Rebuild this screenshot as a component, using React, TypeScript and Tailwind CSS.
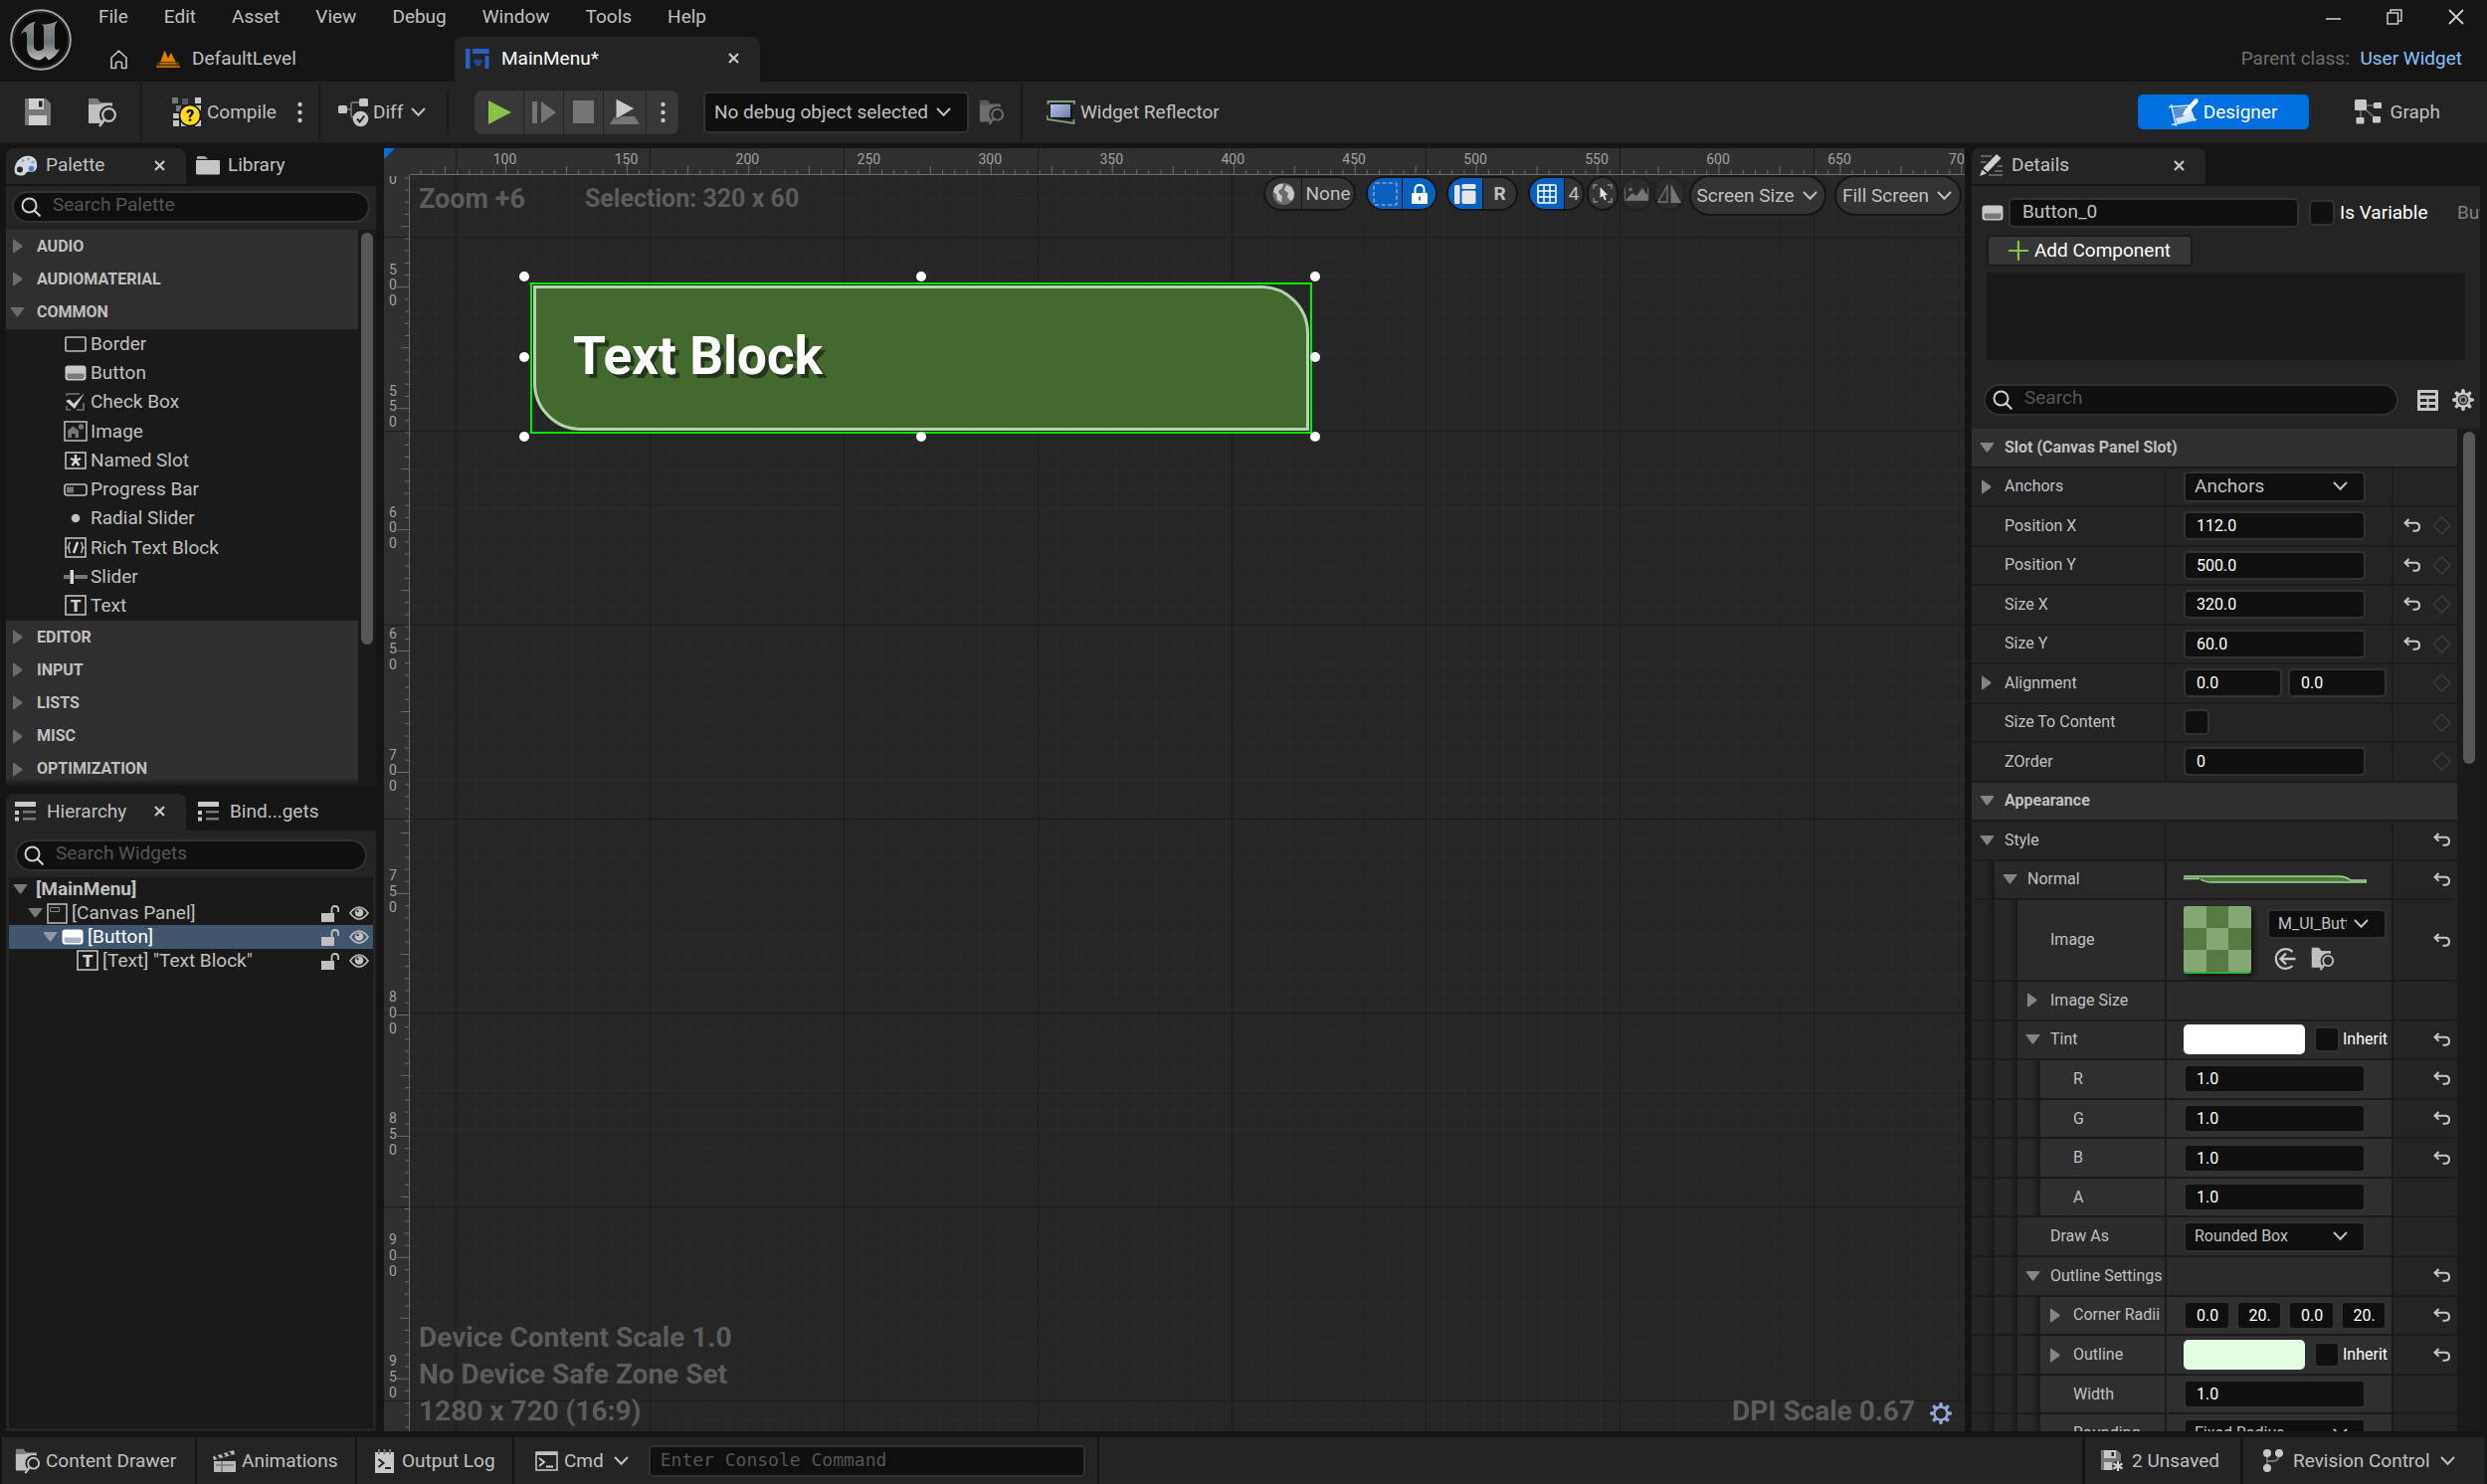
import React from 'react';

interface IconProps {
  className?: string;
}

const Glyph: React.FC<{ w: number; h: number; className?: string; children: React.ReactNode }> = ({ w, h, className = '', children }) => (
  <svg width={w} height={h} viewBox={`0 0 ${w} ${h}`} className={`shrink-0 ${className}`} fill="none" aria-hidden="true">
    {children}
  </svg>
);

/* ---------- icons ---------- */

const Chevron: React.FC<IconProps> = ({ className }) => (
  <Glyph w={15} h={10} className={className}>
    <path d="M1.500 1.500 7.500 7.800l6-6.300" stroke="#c0c0c0" strokeWidth="2" strokeLinecap="round" />
  </Glyph>
);

const CloseX: React.FC<IconProps> = ({ className }) => (
  <Glyph w={11} h={11} className={className}>
    <path d="m1 1 9 9M10 1l-9 9" stroke="#c8c8c8" strokeWidth="2.2" />
  </Glyph>
);

const Arrow: React.FC<{ open?: boolean; fill?: string }> = ({ open, fill = '#7a7a7a' }) =>
  open ? (
    <Glyph w={15} h={10}><path d="M1.2 0h12.6q1.2 0 .5 1L8.400 9q-.9 1-1.800 0L.7 1Q0 0 1.200 0Z" fill={fill} /></Glyph>
  ) : (
    <Glyph w={10} h={15}><path d="M0 1.200v12.600q0 1.200 1 .5L9 8.400q1-.9 0-1.800L1 .7Q0 0 0 1.200Z" fill={fill} /></Glyph>
  );

const SearchIcon: React.FC<IconProps> = ({ className }) => (
  <Glyph w={20} h={20} className={className}>
    <circle cx="8.5" cy="8.5" r="7" stroke="#d0d0d0" strokeWidth="2" />
    <path d="m13.500 13.500 5.300 5.300" stroke="#d0d0d0" strokeWidth="2.200" strokeLinecap="round" />
  </Glyph>
);

const UnrealLogo = () => (
  <Glyph w={62} h={62}>
    <defs>
      <linearGradient id="steel" x1="0" y1="0" x2="0" y2="1">
        <stop offset="0" stopColor="#8b8f90" />
        <stop offset=".55" stopColor="#6d7173" />
        <stop offset="1" stopColor="#b9bcbd" />
      </linearGradient>
    </defs>
    <circle cx="31" cy="31" r="29.800" fill="#0c0c0c" stroke="#a5a5a5" strokeWidth="2" />
    <circle cx="31" cy="31" r="27.500" stroke="#2e2e2e" />
    <path
      d="M11 26C13 19 19 14 26 12.500C24.500 14 24 15.500 24 18V37C24 40 26 42 29 42C31 42 33 41 34 39.500V20C34 17 33 16 31.500 15.500C38 16 44 14 48 12C46 14.500 45 17 45 20V38C45 40 46 41 47.500 41C48.500 41 49.500 40.500 50.500 39.500C48 45 44 49 39 51.500L35.500 47.500C34 49 32 50.500 29.500 51.500C22 51 17 46 17 39V26C17 24 16.300 23 15 23C13.500 23 12 24.500 11 26Z"
      fill="url(#steel)"
    />
  </Glyph>
);

const HomeIcon = () => (
  <Glyph w={19} h={20}>
    <path d="M2 8 9.500 1.200 17 8V18.500h-4.500V14q0-2-3-2t-3 2v4.500H2Z" stroke="#c0c0c0" strokeWidth="1.600" strokeLinejoin="round" />
  </Glyph>
);

const LevelIcon = () => (
  <Glyph w={24} h={20}>
    <path d="M4 14 8.500 1.500l3.500 8 3-5.500 5 10Z" fill="#d98000" />
    <path d="M1.500 13h21l1.500 6H0Z" fill="#5d3a08" />
    <path d="M4 14h16v1.500H4ZM0 17.500h24V19H0Z" fill="#c67600" />
  </Glyph>
);

const WidgetIcon = () => (
  <Glyph w={24} h={20}>
    <path d="M0 0h4.500v20H0ZM7 0h16.500v5H7ZM19.500 7h4v13h-4Z" fill="#2b5fc4" />
    <path d="M12.500 18c-6-4-4.500-7.500-2-7.500 1 0 1.700.6 2 1.300.3-.7 1-1.300 2-1.300 2.500 0 4 3.500-2 7.500Z" fill="#24488f" />
  </Glyph>
);

const SaveIcon = () => (
  <Glyph w={26} h={27}>
    <path d="M0 0h21l5 5v22H0Z" fill="#777" />
    <path d="M4 0h15v11H4ZM4 17h18v10H4Z" fill="#cfcfcf" />
    <path d="M14 2.500h3.500v6H14Z" fill="#222" />
  </Glyph>
);

const FolderSearch: React.FC<{ size?: number; color?: string; back?: string; hole?: string }> = ({ size = 30, color = '#c0c0c0', back = '#7d7d7d', hole = '#242424' }) => (
  <svg width={size} height={size} viewBox="0 0 30 30" className="shrink-0" fill="none" aria-hidden="true">
    <path d="M1 1h9l3 4h12v5H1Z" fill={back} />
    <path d="M1 7h11l2-1h11v20H1Z" fill={color} />
    <circle cx="21.500" cy="17.500" r="9.500" fill={hole} />
    <path d="m10 30 6-8 6 3-5 5Z" fill={hole} />
    <circle cx="21.500" cy="17.500" r="6.300" stroke={color} strokeWidth="2.200" />
    <path d="m17 22-5 7" stroke={color} strokeWidth="2.600" />
  </svg>
);

const CompileIcon = () => (
  <Glyph w={31} h={31}>
    <path d="M0 1h6v6H0ZM4 9h5v6H4Z" fill="#777" />
    <path d="M10 2h6v6h-6Z" fill="#555" />
    <path d="M23 1h6v6h-6ZM1 17h6v5H1ZM1 24h6v6H1ZM9 24h6v6H9ZM23 24h6v6h-6ZM23 9h6v5h-6Z" fill="#c6c6c6" />
    <circle cx="18" cy="19" r="10.500" fill="#ffdb1a" stroke="#141414" strokeWidth="1.500" />
    <text x="18" y="25" textAnchor="middle" fontSize="16" fontWeight="900" fill="#111">?</text>
  </Glyph>
);

const DiffIcon = () => (
  <Glyph w={31} h={30}>
    <path d="M8 12h6M22 5h-7q-2 0-2 2v10q0 3 3 4" stroke="#6e6e6e" strokeWidth="1.800" />
    <rect x="0" y="8" width="9" height="8" rx="1.500" fill="#c6c6c6" />
    <rect x="21" y="1" width="9" height="8" rx="1.500" fill="#c6c6c6" />
    <circle cx="22.500" cy="21.500" r="7.800" fill="#c6c6c6" />
    <path d="m19 21.500 2.700 3 4.500-6" stroke="#222" strokeWidth="2" />
  </Glyph>
);

const Dots = () => (
  <Glyph w={5} h={22}>
    <circle cx="2.500" cy="3" r="2.200" fill="#c6c6c6" />
    <circle cx="2.500" cy="11" r="2.200" fill="#c6c6c6" />
    <circle cx="2.500" cy="19" r="2.200" fill="#c6c6c6" />
  </Glyph>
);

const ReflectorIcon = () => (
  <Glyph w={29} h={24}>
    <defs>
      <linearGradient id="glass" x1="0" y1="0" x2="1" y2="1">
        <stop offset="0" stopColor="#b8c2e6" />
        <stop offset="1" stopColor="#6f7cab" />
      </linearGradient>
    </defs>
    <path d="M4 4h21l1 15-21-1Z" fill="#101010" />
    <path d="M4 4h20v13H4Z" fill="url(#glass)" />
    <path d="M1.500 4V1H28v3M.5 15v4L27.500 23v-4" stroke="#78a57b" strokeWidth="1.800" />
  </Glyph>
);

const DesignerIcon = () => (
  <Glyph w={30} h={28}>
    <path d="M5 10 22 9l3.500 12L8 24.500Z" fill="#cfe6fb" />
    <path d="M5 10h13l-3 8-8 2Z" fill="#5b91cc" />
    <path d="M0 8.500 22 7M2.500 6l5 22M3 26.500l25-5.500M22 11l4.500 12" stroke="#dcecff" strokeWidth="1.400" />
    <path d="m27.500 2.500-9 10" stroke="#fff" strokeWidth="4.500" strokeLinecap="round" />
    <path d="m17 11-3.500 6 7-2.500Z" fill="#fff" />
  </Glyph>
);

const GraphIcon = () => (
  <Glyph w={27} h={25}>
    <path d="M6 6h16M6 6v15M7 7l14 12" stroke="#777" strokeWidth="1.500" />
    <rect width="12" height="11" rx="1.500" fill="#c8c8c8" />
    <rect x="19" y="3" width="8" height="6" rx="1" fill="#c8c8c8" />
    <rect x="1.500" y="18" width="8" height="6.500" rx="1" fill="#c8c8c8" />
    <rect x="18" y="17" width="8" height="6.500" rx="1" fill="#c8c8c8" />
  </Glyph>
);

const PaletteIcon = () => (
  <Glyph w={24} h={21}>
    <path d="M1 18C-1 10 5 1 14 .8 21 .6 24 6 23 12c-1 5-4 5-8 4.500-3-.4-3 4-7 4-3 0-6-.5-7-2.500Z" fill="#d4d8dc" />
    <circle cx="6" cy="14.500" r="3" fill="#242424" />
    <circle cx="17.500" cy="13.500" r="2.700" fill="#3f7fd0" />
    <circle cx="9" cy="5.500" r="1.600" fill="#89a9cf" />
    <circle cx="14.500" cy="4" r="1.600" fill="#89a9cf" />
    <circle cx="19" cy="7" r="1.600" fill="#89a9cf" />
  </Glyph>
);

const FolderIcon = () => (
  <Glyph w={24} h={19}>
    <path d="M1 1q0-1 1-1h7l3 3H1Z" fill="#a5a5a5" />
    <path d="M0 4h23q1 0 1 1v12q0 1.500-1.500 1.500h-21Q0 18.500 0 17Z" fill="#c6c6c6" />
  </Glyph>
);

const TreeIcon = () => (
  <Glyph w={21} h={20}>
    <path d="M0 0h21v5H0ZM0 9h4v4H0ZM0 15.500h4v4H0Z" fill="#c8c8c8" />
    <path d="M8 9h13v2.500H8ZM8 16h13v2.500H8Z" fill="#777" />
  </Glyph>
);

const DetailsIcon = () => (
  <Glyph w={23} h={22}>
    <path d="M1 2h11M1 8h6M18 12h5M15 17h8M9 21h14" stroke="#777" strokeWidth="1.500" />
    <path d="M17 0l4.500 4L8 18 3.500 14Z" fill="#d0d0d0" />
    <path d="M2.500 15.500 7 19.500 0 22Z" fill="#d0d0d0" />
  </Glyph>
);

const ButtonIcon: React.FC<{ bright?: boolean }> = ({ bright }) => (
  <Glyph w={22} h={16}>
    <rect x=".5" y=".5" width="21" height="15" rx="3" fill={bright ? '#fff' : '#c8c8c8'} />
    <path d="M2.500 8.500h17v3q0 2.500-2 2.500h-13q-2 0-2-2.500Z" fill={bright ? '#a9b4c2' : '#7a7a7a'} />
  </Glyph>
);

const LockIcon = () => (
  <Glyph w={19} h={17}>
    <path d="M0 8h13v9H0Z" fill="#c0c0c0" />
    <path d="M10.500 8V4.500q0-3.500 3.300-3.500t3.300 3.500V7" stroke="#c0c0c0" strokeWidth="1.800" />
  </Glyph>
);

const EyeIcon = () => (
  <Glyph w={20} h={14}>
    <path d="M1 7q9-12 18 0-9 12-18 0Z" stroke="#c0c0c0" strokeWidth="1.600" />
    <circle cx="10" cy="6.500" r="4.300" fill="#c0c0c0" />
    <circle cx="8.500" cy="5" r="1.200" fill="#333" />
  </Glyph>
);

const TextIcon = () => (
  <Glyph w={22} h={22}>
    <rect x="1" y="1" width="20" height="19" stroke="#c0c0c0" strokeWidth="1.600" />
    <text x="11" y="17" textAnchor="middle" fontSize="17" fontWeight="900" fill="#d0d0d0">T</text>
  </Glyph>
);

const UndoIcon = () => (
  <Glyph w={18} h={15}>
    <path d="M5.500 1 1.500 4.800l4 3.800M1.500 4.800H12q4 0 4 4t-4 4H9.500" stroke="#c6c6c6" strokeWidth="2" />
  </Glyph>
);

const KeyIcon = () => (
  <Glyph w={19} h={19}>
    <path d="m9.500 1 8.500 8.500-8.500 8.500L1 9.500Z" stroke="#3d3d3d" strokeWidth="1.400" />
  </Glyph>
);

const GearIcon: React.FC<{ color?: string; solid?: boolean }> = ({ color = '#c6c6c6', solid }) => (
  <Glyph w={24} h={24}>
    {[0, 45, 90, 135, 180, 225, 270, 315].map((a) => (
      <path key={a} d="M10.500 4.500 11 1.500h2l.5 3Z" fill={color} stroke={color} transform={`rotate(${a} 12 12)`} />
    ))}
    <circle cx="12" cy="12" r="6.500" stroke={color} strokeWidth="2.400" />
    {!solid && <circle cx="12" cy="12" r="3" stroke="#8a8a8a" strokeWidth="2" />}
  </Glyph>
);

const TableIcon = () => (
  <Glyph w={21} h={21}>
    <rect width="21" height="21" rx="1" fill="#c6c6c6" />
    <path d="M3 3h15v2.500H3ZM3 9h6.500v3H3ZM11.500 9H18v3h-6.500ZM3 15h6.500v3H3ZM11.500 15H18v3h-6.500Z" fill="#242424" />
  </Glyph>
);

/* ---------- shared controls ---------- */

const fieldBox = 'rounded-[5px] border-2 border-[#323232] bg-[#0f0f0f] outline-none';

const SearchBox: React.FC<{ label: string; className?: string }> = ({ label, className = '' }) => (
  <label className={`flex h-8 items-center rounded-full border-2 border-[#323232] bg-[#0f0f0f] pl-[7px] ${className}`}>
    <SearchIcon />
    <input type="text" aria-label={label} placeholder={label} className="min-w-0 flex-1 bg-transparent pb-1 pl-3 outline-none placeholder:text-[#555]" />
  </label>
);

const Check: React.FC<{ id: string; label: string }> = ({ id, label }) => (
  <input id={id} type="checkbox" aria-label={label} className={`size-[26px] shrink-0 appearance-none ${fieldBox}`} />
);

const Drop: React.FC<{ label: string; value: string; className?: string }> = ({ label, value, className = '' }) => (
  <span className="relative flex items-center">
    <select aria-label={label} className={`appearance-none ${fieldBox} ${className}`}>
      <option>{value}</option>
    </select>
    <Chevron className="pointer-events-none absolute right-[18px]" />
  </span>
);

const PanelTab: React.FC<{ icon: React.ReactNode; title: string; active?: boolean; className?: string }> = ({ icon, title, active, className = '' }) => (
  <button className={`flex items-center rounded-t-lg pb-[2px] ${active ? 'bg-[#242424]' : ''} ${className}`}>
    <span className="flex w-8 shrink-0">{icon}</span>
    <span>{title}</span>
    {active && <CloseX className="mr-[21px] ml-auto" />}
  </button>
);

/* ---------- header ---------- */

const MENUS = ['File', 'Edit', 'Asset', 'View', 'Debug', 'Window', 'Tools', 'Help'];

const Header = () => (
  <header className="flex h-[82px] shrink-0 pl-[10px]">
    <div className="pt-[9px]"><UnrealLogo /></div>
    <div className="flex flex-1 flex-col">
      <div className="flex h-[37px] items-center justify-between pb-1">
        <nav className="flex gap-9 pl-[27px]">
          {MENUS.map((m) => <button key={m}>{m}</button>)}
        </nav>
        <div className="flex items-center gap-[46px] pr-[23px]">
          <button aria-label="Minimize"><Glyph w={15} h={16}><path d="M0 10h15" stroke="#c8c8c8" strokeWidth="1.600" /></Glyph></button>
          <button aria-label="Restore"><Glyph w={16} h={16}><path d="M1 4h10.500v11H1ZM4 4V1h11v11h-3.500" stroke="#c8c8c8" strokeWidth="1.500" /></Glyph></button>
          <button aria-label="Close"><Glyph w={16} h={16}><path d="m1 1 14 14M15 1 1 15" stroke="#d0d0d0" strokeWidth="1.800" /></Glyph></button>
        </div>
      </div>
      <div className="flex h-[45px] items-center">
        <button aria-label="Home" className="ml-[38px]"><HomeIcon /></button>
        <button className="flex w-[328px] items-center gap-3 pb-[2px] pl-7"><LevelIcon />DefaultLevel</button>
        <button className="flex h-full w-[307px] items-center gap-3 rounded-t-lg bg-[#242424] pb-[2px] pl-[11px] text-white">
          <WidgetIcon />MainMenu*<CloseX className="mr-[21px] ml-auto" />
        </button>
        <p className="ml-auto pr-[25px] pb-[2px] text-[#6f6f6f]">Parent class: <a href="#user-widget" className="ml-[6px] text-[#8ac0ff]">User Widget</a></p>
      </div>
    </div>
  </header>
);

const Toolbar = () => (
  <div className="flex h-[62px] shrink-0 items-center border-b border-[#1c1c1c] bg-[#242424]">
    <div className="flex h-[58px] w-[143px] items-center gap-[37px] border-r-2 border-[#1a1a1a] pl-[25px]">
      <button aria-label="Save"><SaveIcon /></button>
      <button aria-label="Browse"><FolderSearch /></button>
    </div>
    <div className="flex h-[58px] w-[179px] items-center border-r-2 border-[#1a1a1a] pl-[30px]">
      <button className="flex items-center gap-1"><CompileIcon />Compile</button>
      <button aria-label="Compile options" className="mr-4 ml-auto"><Dots /></button>
    </div>
    <div className="flex h-[44px] w-[129px] items-center border-r-2 border-[#1a1a1a] pl-[18px]">
      <button className="flex items-center gap-1"><DiffIcon />Diff<Chevron className="ml-1" /></button>
    </div>
    <div className="ml-[26px] flex h-[44px] divide-x divide-[#242424] overflow-hidden rounded-lg bg-[#383838]">
      <button aria-label="Play" className="flex w-[50px] items-center pl-[14px]"><Glyph w={24} h={26}><path d="M0 1v24l23-12Z" fill="#8bc24a" /></Glyph></button>
      <button aria-label="Step" className="flex w-10 items-center justify-center"><Glyph w={24} h={24}><path d="M0 1h5v22H0ZM9 1v22l15-11Z" fill="#757575" /></Glyph></button>
      <button aria-label="Stop" className="flex w-10 items-center justify-center"><Glyph w={21} h={23}><path d="M0 0h21v23H0Z" fill="#757575" /></Glyph></button>
      <button aria-label="Launch" className="flex w-[43px] items-center justify-center">
        <Glyph w={30} h={27}>
          <path d="M5 18h20l5 8H0Z" fill="#757575" />
          <path d="M6 0v21l19-11Z" fill="#c8c8c8" stroke="#383838" />
        </Glyph>
      </button>
      <button aria-label="Play options" className="flex w-8 items-center justify-center"><Dots /></button>
    </div>
    <div className="ml-[25px]">
      <Drop label="Debug object" value="No debug object selected" className="h-[42px] w-[267px] pl-[9px]" />
    </div>
    <button aria-label="Browse debug object" className="mr-4 ml-[10px]"><FolderSearch size={26} color="#6e6e6e" back="#5a5a5a" /></button>
    <button className="flex h-[58px] items-center gap-[5px] border-l-2 border-[#1a1a1a] pl-6"><ReflectorIcon />Widget Reflector</button>
    <button className="ml-auto flex h-[35px] w-[172px] items-center justify-center gap-[5px] rounded-[5px] bg-[#0070e0] text-white"><DesignerIcon />Designer</button>
    <button className="mr-[47px] ml-[46px] flex items-center gap-[9px]"><GraphIcon />Graph</button>
  </div>
);

/* ---------- palette ---------- */

const line = '#c0c0c0';

const COMMON: { name: string; icon: React.ReactNode }[] = [
  { name: 'Border', icon: <Glyph w={22} h={16}><rect x="1" y="1" width="20" height="14" rx="1" stroke={line} strokeWidth="1.600" /></Glyph> },
  { name: 'Button', icon: <ButtonIcon /> },
  { name: 'Check Box', icon: <Glyph w={22} h={20}><path d="M2 4V2h13M2 14v4h4M12 18h7v-7" stroke="#777" strokeWidth="1.500" /><path d="m1 9 4-1.500 4 4.500L20 1 10 17Z" fill="#d0d0d0" /></Glyph> },
  { name: 'Image', icon: <Glyph w={24} h={21}><rect x="1" y="1" width="22" height="19" stroke={line} strokeWidth="1.500" /><path d="M4 10 9.500 5.500 15 10v7h-3.500v-4H8v4H4.500Z" fill="#777" /><circle cx="17.500" cy="6" r="2.700" fill="#777" /></Glyph> },
  { name: 'Named Slot', icon: <Glyph w={22} h={18}><rect x="1" y="1" width="20" height="16" stroke={line} strokeWidth="1.600" /><path d="M11 3v6M11 9 6 7M11 9l5-2M11 9l-3.500 5M11 9l3.500 5" stroke="#d8d8d8" strokeWidth="2.400" /></Glyph> },
  { name: 'Progress Bar', icon: <Glyph w={24} h={13}><rect x="1" y="1" width="22" height="11" rx="2.500" stroke={line} strokeWidth="1.600" /><path d="M3 3.500h7v6H3Z" fill="#777" /></Glyph> },
  { name: 'Radial Slider', icon: <Glyph w={10} h={10}><circle cx="5" cy="5" r="4.300" fill={line} /></Glyph> },
  { name: 'Rich Text Block', icon: <Glyph w={22} h={21}><rect x="1" y="1" width="20" height="19" stroke={line} strokeWidth="1.600" /><path d="M6 5.500q-1.500 0-1.500 2T3 10.500q1.500 0 1.500 2.500T6 15.500M16 5.500q1.500 0 1.500 2t1.500 3q-1.500 0-1.500 2.500T16 15.500" stroke={line} strokeWidth="1.400" /><path d="m13 5-4 11" stroke="#d8d8d8" strokeWidth="2.400" /></Glyph> },
  { name: 'Slider', icon: <Glyph w={24} h={14}><path d="M0 5h6v4H0ZM11 5h13v4H11Z" fill="#777" /><path d="M6.500 0H10v14H6.500Z" fill="#d8d8d8" /></Glyph> },
  { name: 'Text', icon: <TextIcon /> },
];

const Category: React.FC<{ name: string; open?: boolean }> = ({ name, open }) => (
  <button className="flex items-center bg-[#2f2f2f] pl-1 text-[16px] font-bold">
    <span className="flex w-[27px] justify-center pr-[12px]"><Arrow open={open} fill="#6b6b6b" /></span>
    {name}
  </button>
);

const Palette = () => (
  <section className="flex min-h-0 flex-1 flex-col">
    <div className="flex h-[36px] shrink-0">
      <PanelTab active title="Palette" className="w-[181px] pl-2" icon={<PaletteIcon />} />
      <PanelTab title="Library" className="pl-[10px]" icon={<FolderIcon />} />
    </div>
    <div className="mt-[2px] flex min-h-0 flex-1 flex-col bg-[#242424] pt-[5px]">
      <SearchBox label="Search Palette" className="mx-[6px]" />
      <div className="mt-[7px] flex min-h-0 flex-1 bg-[#1a1a1a]">
        <div className="relative flex-1 overflow-hidden">
          <div className="grid h-[100px] auto-rows-fr">
            <Category name="AUDIO" />
            <Category name="AUDIOMATERIAL" />
            <Category name="COMMON" open />
          </div>
          <ul className="grid h-[293px] auto-rows-fr">
            {COMMON.map((w) => (
              <li key={w.name} className="flex items-center gap-[3px] pl-[58px]">
                <span className="flex w-6 justify-center">{w.icon}</span>
                {w.name}
              </li>
            ))}
          </ul>
          <div className="grid h-[166px] auto-rows-fr">
            {['EDITOR', 'INPUT', 'LISTS', 'MISC', 'OPTIMIZATION'].map((c) => <Category key={c} name={c} />)}
          </div>
          <div className="absolute inset-x-0 bottom-0 h-2 bg-linear-to-t from-[#1a1a1a] to-transparent" />
        </div>
        <div className="w-[18px] px-[3px] pt-[3px]"><div className="h-[414px] rounded-full bg-[#575757]" /></div>
      </div>
    </div>
  </section>
);

/* ---------- hierarchy ---------- */

const RowTools = () => (
  <span className="ml-auto flex items-center gap-[9px] pr-1">
    <button aria-label="Lock"><LockIcon /></button>
    <button aria-label="Visibility"><EyeIcon /></button>
  </span>
);

const Hierarchy = () => (
  <section className="flex min-h-0 flex-1 flex-col">
    <div className="flex h-[37px] shrink-0">
      <PanelTab active title="Hierarchy" className="w-[181px] pl-[9px]" icon={<TreeIcon />} />
      <PanelTab title="Bind...gets" className="pl-3" icon={<TreeIcon />} />
    </div>
    <div className="flex min-h-0 flex-1 flex-col bg-[#242424] px-[3px] pt-[9px] pb-[3px]">
      <SearchBox label="Search Widgets" className="mx-[6px]" />
      <ul className="mt-[6px] flex-1 bg-[#1a1a1a]">
        <li className="flex h-6 items-center gap-2 pl-1 font-bold"><Arrow open />[MainMenu]</li>
        <li className="flex h-6 items-center gap-[4px] pl-[19px]">
          <Arrow open />
          <Glyph w={21} h={21}><rect x="1" y="1" width="19" height="19" stroke={line} strokeWidth="1.500" /><path d="M3.500 4.500h9v4h-9Z" stroke="#8a8a8a" /></Glyph>
          [Canvas Panel]<RowTools />
        </li>
        <li className="flex h-6 items-center gap-[4px] bg-[#40566f] pl-[34px] text-white">
          <Arrow open fill="#8f99a5" /><ButtonIcon bright />[Button]<RowTools />
        </li>
        <li className="flex h-6 items-center gap-[4px] pl-[68px]"><TextIcon />[Text] "Text Block"<RowTools /></li>
      </ul>
    </div>
  </section>
);

/* ---------- designer viewport ---------- */

const PX_PER_UNIT = 2.439;
const unitX = (u: number) => 122.5 + (u - 100) * PX_PER_UNIT;
const unitY = (u: number) => 139.7 + (u - 500) * PX_PER_UNIT;
const range = (from: number, to: number, step: number) => Array.from({ length: Math.floor((to - from) / step) + 1 }, (_, i) => from + i * step);
const tick = (u: number) => (u % 50 === 0 ? 12 : u % 25 === 0 ? 8 : 4);

const Rulers = () => (
  <svg className="absolute inset-0 size-full" aria-hidden="true">
    <defs>
      <pattern id="fine" x="72" y="89" width="19.5" height="19.5" patternUnits="userSpaceOnUse">
        <path d="M.5 0v19.500M0 .5h19.500" stroke="#2a2a2a" />
      </pattern>
      <pattern id="coarse" x="72" y="89" width="195" height="195" patternUnits="userSpaceOnUse">
        <path d="M.5 0v195M0 .5h195" stroke="#1c1c1c" />
      </pattern>
      <clipPath id="left-ruler"><rect y="28" width="27" height="100%" /></clipPath>
    </defs>
    <rect width="100%" height="100%" fill="#262626" />
    <rect width="100%" height="100%" fill="url(#fine)" />
    <rect width="100%" height="27" fill="#303030" />
    <rect width="26" height="100%" fill="#303030" />
    <rect width="100%" height="100%" fill="url(#coarse)" />
    <path d="M0 0h11L0 11Z" fill="#0070e0" />
    <g stroke="#6b6b6b">
      <line x1="26" x2="100%" y1="26.500" y2="26.500" />
      <line x1="25.500" x2="25.500" y1="27" y2="100%" />
      {range(65, 700, 5).map((u) => <line key={u} x1={unitX(u)} x2={unitX(u)} y1={26 - tick(u)} y2="26" />)}
      {range(455, 980, 5).map((u) => <line key={u} y1={unitY(u)} y2={unitY(u)} x1={25 - tick(u)} x2="25" />)}
    </g>
    <g fill="#a0a0a0" fontSize="14" textAnchor="middle">
      {range(100, 700, 50).map((u) => <text key={u} x={unitX(u) - 1} y="16">{u}</text>)}
      <g clipPath="url(#left-ruler)">
        <text x="9" y="36">0</text>
        {range(500, 950, 50).map((u) =>
          String(u).split('').map((d, i) => <text key={`${u}-${i}`} x="9" y={unitY(u) - 13 + i * 15.7}>{d}</text>)
        )}
      </g>
    </g>
  </svg>
);

const pill = 'flex h-[35px] items-center divide-x divide-[#151515] overflow-hidden rounded-full border-2 border-[#151515] bg-[#333]';
const seg = 'flex h-full items-center justify-center';

const ViewportTools = () => (
  <div className="absolute top-[27px] right-[3px] flex items-start">
    <div className={`${pill} mt-px mr-[10px]`}>
      <button aria-label="Localization" className={`${seg} w-[37px]`}>
        <Glyph w={27} h={24}>
          <circle cx="13.500" cy="12" r="11" fill="#6c6c6c" />
          <path d="M4 6q4-5 9-4l-1 4-4 3 1 3 3 2-1 6-4-2-1-6-3-2ZM16 3l5 2 3 6-1 6-3 2-3-4 1-4-4-3Z" fill="#c8c8c8" />
        </Glyph>
      </button>
      <button className={`${seg} w-[52px]`}>None</button>
    </div>
    <div className={`${pill} mt-px mr-[9px]`}>
      <button aria-label="Show outlines" className={`${seg} w-[35px] bg-[#0960be]`}><Glyph w={25} h={24}><rect x="1" y="1" width="23" height="22" rx="2" stroke="#8aa0bb" strokeWidth="1.600" strokeDasharray="4 2.500" /></Glyph></button>
      <button aria-label="Respect locks" className={`${seg} w-[33px] bg-[#0960be]`}><Glyph w={16} h={20}><rect y="9" width="16" height="11" rx="1" fill="#fff" /><path d="M3.500 9V5.500Q3.500 1 8 1t4.500 4.500V9" stroke="#fff" strokeWidth="2" /><path d="M7.200 12.500h1.600v4H7.200Z" fill="#0960be" /></Glyph></button>
    </div>
    <div className={`${pill} mt-px mr-[10px]`}>
      <button aria-label="Flow direction" className={`${seg} w-[35px] bg-[#0960be]`}><Glyph w={22} h={20}><rect width="5.500" height="19" rx="1.500" fill="#e6e6e6" y="1" /><rect x="7.500" width="14" height="5" rx="1.500" fill="#e6e6e6" /><rect x="7.500" y="6.500" width="14" height="13.500" rx="2" fill="#e6e6e6" /></Glyph></button>
      <button className={`${seg} w-[33px] font-bold`}>R</button>
    </div>
    <div className={`${pill} mt-px mr-[2px]`}>
      <button aria-label="Grid snapping" className={`${seg} w-[35px] bg-[#0960be]`}><Glyph w={20} h={20}><rect x="1" y="1" width="18" height="18" rx="1" stroke="#fff" strokeWidth="1.600" /><path d="M7 1v18M13 1v18M1 7h18M1 13h18" stroke="#fff" strokeWidth="1.500" /></Glyph></button>
      <button className={`${seg} w-[18px]`}>4</button>
    </div>
    <button aria-label="Zoom to fit" className={`${pill} mt-px mr-[2px] w-8 justify-center`}>
      <Glyph w={20} h={19}><path d="M1 5V1h4M15 1h4v4M19 14v4h-4M5 18H1v-4" stroke="#8a8a8a" strokeWidth="1.400" /><path d="M7.500 3v11l2.500-2 2 4.500 1.700-1L12 11.500l3-.5Z" fill="#e0e0e0" /></Glyph>
    </button>
    <button aria-label="Preview background" className="mt-px mr-[1px] flex h-[35px] w-8 items-center justify-center rounded-full border-2 border-[#202020] bg-[#2b2b2b]">
      <Glyph w={24} h={14}><path d="M.5 1v12.500h23V1" stroke="#6a6a6a" /><path d="M1 13 8 6l4 3 6-8 5.500 8v4Z" fill="#757575" /><circle cx="6" cy="2.500" r="1.700" fill="#757575" /></Glyph>
    </button>
    <button aria-label="Flip preview" className="mt-px mr-[4px] flex h-[35px] w-8 items-center justify-center rounded-full border-2 border-[#202020] bg-[#2b2b2b]">
      <Glyph w={24} h={19}><path d="M10 2v16H1Z" stroke="#757575" strokeWidth="1.300" /><path d="M13.500 0v19H24Z" fill="#757575" /></Glyph>
    </button>
    <button className="mr-2 flex h-[41px] w-[138px] items-center justify-center gap-2 rounded-full border-2 border-[#151515] bg-[#333] pr-[2px] whitespace-nowrap">Screen Size<Chevron /></button>
    <button className="flex h-[41px] w-[128px] items-center justify-center gap-2 rounded-full border-2 border-[#151515] bg-[#333] pr-[2px] whitespace-nowrap">Fill Screen<Chevron /></button>
  </div>
);

const handle = 'absolute size-[10px] rounded-full bg-white';

const SelectedButton = () => (
  <div className="absolute top-[135px] left-[147px] h-[152px] w-[786px] border-2 border-[#00f000] p-px">
    <button className="flex size-full items-center rounded-tr-[48px] rounded-bl-[48px] border-[3px] border-[#b4d4b0] bg-[#44692f] pb-1 pl-[37px] text-[53px] font-bold text-white [text-shadow:4px_4px_0_#22351a]">
      Text Block
    </button>
    <span className={`${handle} -top-[13px] -left-[13px]`} />
    <span className={`${handle} -top-[13px] left-[386px]`} />
    <span className={`${handle} -top-[13px] -right-[10px]`} />
    <span className={`${handle} top-[68px] -left-[13px]`} />
    <span className={`${handle} top-[68px] -right-[10px]`} />
    <span className={`${handle} -bottom-[10px] -left-[13px]`} />
    <span className={`${handle} -bottom-[10px] left-[386px]`} />
    <span className={`${handle} -right-[10px] -bottom-[10px]`} />
  </div>
);

const Viewport = () => (
  <main className="relative min-w-0 flex-1 overflow-hidden">
    <Rulers />
    <div className="absolute top-[32px] left-[35px] flex h-[38px] items-center gap-[60px] font-bold text-[#5c5c5c]">
      <span className="text-[27px]">Zoom +6</span>
      <span className="text-[25px]">Selection: 320 x 60</span>
    </div>
    <ViewportTools />
    <SelectedButton />
    <div className="absolute bottom-[2px] left-[35px] text-[28px] leading-[37px] font-bold text-[#5c5c5c]">
      <p>Device Content Scale 1.0</p>
      <p>No Device Safe Zone Set</p>
      <p>1280 x 720 (16:9)</p>
    </div>
    <div className="absolute right-[12px] bottom-[2px] flex items-center gap-[14px] text-[28px] leading-[37px] font-bold text-[#5c5c5c]">
      DPI Scale 0.67
      <button aria-label="DPI settings" className="pt-1"><GearIcon color="#94a7da" solid /></button>
    </div>
  </main>
);

/* ---------- details ---------- */

interface Prop {
  name: string;
  depth?: number;
  arrow?: 'open' | 'closed';
  value?: React.ReactNode;
  undo?: boolean;
  keyed?: boolean;
}

const NumberField: React.FC<{ label: string; value: string }> = ({ label, value }) => (
  <input type="text" aria-label={label} defaultValue={value} className={`h-[29px] w-[183px] pl-[11px] text-white ${fieldBox}`} />
);

const Vector: React.FC<{ label: string; values: string[] }> = ({ label, values }) => (
  <span className="flex w-[204px] gap-[6px]">
    {values.map((v, i) => (
      <input key={i} type="text" aria-label={`${label} ${i + 1}`} defaultValue={v} className={`h-[29px] min-w-0 flex-1 pr-[10px] pl-[11px] text-white ${fieldBox}`} />
    ))}
  </span>
);

const ColorValue: React.FC<{ label: string; swatch: string }> = ({ label, swatch }) => (
  <>
    <button aria-label={`${label} color`} className={`h-[30px] w-[122px] rounded-[5px] ${swatch}`} />
    <span className="w-[9px]" />
    <Check id={`${label}-inherit`} label={`Inherit ${label}`} />
    <label htmlFor={`${label}-inherit`} className="pl-[3px] text-white">Inherit</label>
  </>
);

const DEPTH_BG = ['bg-[#242424]', 'bg-[#282828]', 'bg-[#2b2b2b]', 'bg-[#2f2f2f]'];
const INDENT_BG = ['from-[#242424]', 'from-[#272727]', 'from-[#292929]'];

const PropRow: React.FC<Prop> = ({ name, depth = 0, arrow, value, undo, keyed }) => (
  <div className="flex border-b-2 border-[#1b1b1b]">
    {INDENT_BG.slice(0, depth).map((bg) => (
      <span key={bg} className={`w-[23px] shrink-0 bg-linear-to-r from-60% to-[#1a1a1a] ${bg}`} />
    ))}
    <div className={`flex min-w-0 flex-1 items-center overflow-hidden whitespace-nowrap ${DEPTH_BG[depth]}`}>
      <span className="flex w-[33px] shrink-0 justify-center pr-[3px]">{arrow && <Arrow open={arrow === 'open'} fill="#858585" />}</span>
      {name}
    </div>
    <div className={`flex w-[228px] shrink-0 items-center overflow-hidden border-l-2 border-[#1b1b1b] pl-[17px] ${DEPTH_BG[depth]}`}>{value}</div>
    <div className="flex w-[66px] shrink-0 items-center justify-end gap-[11px] border-l-2 border-[#1b1b1b] bg-[#242424] pr-[6px]">
      {undo && <button aria-label={`Reset ${name}`}><UndoIcon /></button>}
      {keyed && <button aria-label={`Keyframe ${name}`}><KeyIcon /></button>}
    </div>
  </div>
);

const SectionHead: React.FC<{ title: string }> = ({ title }) => (
  <button className="flex items-center border-b-2 border-[#1b1b1b] bg-[#2f2f2f] font-bold">
    <span className="flex w-[33px] justify-center pr-[3px]"><Arrow open fill="#858585" /></span>
    {title}
  </button>
);

const num = (label: string, v: string) => <NumberField label={label} value={v} />;

const SLOT: Prop[] = [
  { name: 'Anchors', arrow: 'closed', value: <Drop label="Anchors" value="Anchors" className="h-[31px] w-[183px] pl-[9px] text-[19px]" /> },
  { name: 'Position X', value: num('Position X', '112.0'), undo: true, keyed: true },
  { name: 'Position Y', value: num('Position Y', '500.0'), undo: true, keyed: true },
  { name: 'Size X', value: num('Size X', '320.0'), undo: true, keyed: true },
  { name: 'Size Y', value: num('Size Y', '60.0'), undo: true, keyed: true },
  { name: 'Alignment', arrow: 'closed', value: <Vector label="Alignment" values={['0.0', '0.0']} />, keyed: true },
  { name: 'Size To Content', value: <Check id="size-to-content" label="Size To Content" />, keyed: true },
  { name: 'ZOrder', value: num('ZOrder', '0'), keyed: true },
];

const BRUSH: Prop[] = [
  { name: 'Image Size', depth: 2, arrow: 'closed' },
  { name: 'Tint', depth: 2, arrow: 'open', undo: true, value: <ColorValue label="Tint" swatch="bg-white" /> },
  { name: 'R', depth: 3, undo: true, value: num('R', '1.0') },
  { name: 'G', depth: 3, undo: true, value: num('G', '1.0') },
  { name: 'B', depth: 3, undo: true, value: num('B', '1.0') },
  { name: 'A', depth: 3, value: num('A', '1.0') },
  { name: 'Draw As', depth: 2, value: <Drop label="Draw As" value="Rounded Box" className="h-[31px] w-[183px] pl-[9px]" /> },
  { name: 'Outline Settings', depth: 2, arrow: 'open', undo: true },
  { name: 'Corner Radii', depth: 3, arrow: 'closed', undo: true, value: <Vector label="Corner Radii" values={['0.0', '20.0', '0.0', '20.0']} /> },
  { name: 'Outline', depth: 3, arrow: 'closed', undo: true, value: <ColorValue label="Outline" swatch="bg-[#e3ffe3]" /> },
  { name: 'Width', depth: 3, value: num('Width', '1.0') },
];

const BrushPreview = () => (
  <Glyph w={184} h={8}>
    <path d="M0 1H156q7 0 12 4h16v2H28q-7 0-12-4H0Z" fill="#4d7d36" />
    <path d="M0 1H156q7 0 12 4h16M0 3.500h16M184 7H28q-7 0-11-3" stroke="#a5d3a0" strokeWidth="1.400" />
  </Glyph>
);

const ImageValue = () => (
  <div className="flex items-center gap-4">
    <div className="grid h-[68px] w-[68px] grid-cols-3 overflow-hidden rounded-[3px] border-b-2 border-[#2fae3c] shadow-[3px_3px_4px_#151515]">
      {range(0, 8, 1).map((i) => <span key={i} className={i % 2 ? 'bg-[#567b42]' : 'bg-[#84a873]'} />)}
    </div>
    <div className="flex flex-col gap-2">
      <Drop label="Image asset" value="M_UI_Button" className="h-[30px] w-[120px] pr-[38px] pl-[9px]" />
      <div className="flex gap-[15px] pl-[6px]">
        <button aria-label="Use selected asset">
          <Glyph w={23} h={24}><path d="M19.500 5A9.800 9.800 0 1 0 19.500 19" stroke="#c6c6c6" strokeWidth="2.200" /><path d="M22.500 12H7.500M13 6.500 7.500 12l5.500 5.500" stroke="#c6c6c6" strokeWidth="2.400" /></Glyph>
        </button>
        <button aria-label="Browse to asset"><FolderSearch size={24} back="#c0c0c0" hole="#2b2b2b" /></button>
      </div>
    </div>
  </div>
);

const Details = () => (
  <aside className="flex w-[511px] shrink-0 flex-col">
    <div className="flex h-[36px] shrink-0">
      <PanelTab active title="Details" className="w-[235px] pl-2" icon={<DetailsIcon />} />
    </div>
    <div className="mt-[2px] flex min-h-0 flex-1 flex-col overflow-hidden bg-[#242424] pt-3">
      <div className="flex h-[30px] items-center overflow-hidden pl-[10px] whitespace-nowrap">
        <ButtonIcon />
        <input type="text" aria-label="Widget name" defaultValue="Button_0" className={`ml-[5px] h-[30px] w-[292px] shrink-0 pb-1 pl-3 ${fieldBox}`} />
        <span className="w-[10px] shrink-0" />
        <Check id="is-variable" label="Is Variable" />
        <label htmlFor="is-variable" className="w-[123px] shrink-0 pl-[5px] text-white">Is Variable</label>
        <span className="text-[#808080]">Button</span>
      </div>
      <button className="mt-[7px] ml-[15px] flex h-8 w-[207px] shrink-0 items-center justify-center gap-[6px] rounded-[5px] border-2 border-[#1a1a1a] bg-[#363636] text-white">
        <Glyph w={20} h={20}><path d="M10 0v20M0 10h20" stroke="#8bc24a" strokeWidth="2.200" /></Glyph>
        Add Component
      </button>
      <div className="mx-[15px] mt-[6px] h-[88px] shrink-0 bg-[#1a1a1a]" />
      <div className="mt-6 flex shrink-0 items-center pl-3">
        <SearchBox label="Search" className="w-[417px]" />
        <button aria-label="Property matrix" className="ml-[19px]"><TableIcon /></button>
        <button aria-label="View options" className="ml-[13px]"><GearIcon /></button>
      </div>
      <div className="mt-[13px] flex min-h-0 flex-1 overflow-hidden bg-[#1a1a1a] text-[16px]">
        <div className="min-w-0 flex-1">
          <div className="grid h-[474px] auto-rows-fr">
            <SectionHead title="Slot (Canvas Panel Slot)" />
            {SLOT.map((p) => <PropRow key={p.name} {...p} />)}
            <SectionHead title="Appearance" />
            <PropRow name="Style" arrow="open" undo />
            <PropRow name="Normal" depth={1} arrow="open" undo value={<BrushPreview />} />
          </div>
          <div className="grid h-[82px]"><PropRow name="Image" depth={2} undo value={<ImageValue />} /></div>
          <div className="grid h-[475px] auto-rows-fr">
            {BRUSH.map((p) => <PropRow key={p.name} {...p} />)}
            <PropRow name="Rounding" depth={3} value={<Drop label="Rounding" value="Fixed Radius" className="h-[31px] w-[183px] pl-[9px]" />} />
          </div>
        </div>
        <div className="w-[23px] pt-[3px] pr-[5px] pl-[6px]"><div className="h-[334px] rounded-full bg-[#575757]" /></div>
      </div>
    </div>
  </aside>
);

/* ---------- status bar ---------- */

const StatusBar = () => (
  <footer className="mx-[2px] mt-[6px] flex h-[47px] shrink-0 items-center bg-[#242424]">
    <button className="flex h-full w-[196px] items-center gap-[5px] border-r-2 border-[#151515] pl-[13px]"><FolderSearch size={26} />Content Drawer</button>
    <button className="flex h-full w-[161px] items-center gap-[6px] border-r-2 border-[#151515] pl-4">
      <Glyph w={23} h={24}><path d="M1 12h22v11H1Z" fill="#b8b8b8" /><path d="M3 16h18M9 12v11" stroke="#777" strokeWidth="1.500" /><path d="M0 7.500 21 1l1 4L1 11Z" fill="#b8b8b8" /><path d="m3 6.500 3 3M9 4.500l3 3M15 3l3 3" stroke="#242424" strokeWidth="2.500" /></Glyph>
      Animations
    </button>
    <button className="flex h-full w-[158px] items-center gap-2 border-r-2 border-[#151515] pl-[18px]">
      <Glyph w={19} h={24}><path d="M0 3h19v21H0Z" fill="#c8c8c8" /><path d="M4 0v5M9.500 0v5M15 0v5" stroke="#777" strokeWidth="2" /><path d="m3.500 10 5 4-5 4M10 19h6" stroke="#222" strokeWidth="2" /></Glyph>
      Output Log
    </button>
    <button className="flex h-full items-center gap-[6px] pl-[21px]">
      <Glyph w={23} h={20}><rect x="1" y="1" width="21" height="18" stroke="#c0c0c0" strokeWidth="1.600" /><path d="M1 1h21v3H1Z" fill="#c0c0c0" /><path d="m4 7 5 4-5 4M11 15.500h7" stroke="#d0d0d0" strokeWidth="1.800" /></Glyph>
      Cmd<Chevron className="ml-1" />
    </button>
    <input type="text" aria-label="Console command" placeholder="Enter Console Command" className={`ml-5 h-8 w-[439px] pb-[2px] pl-[10px] font-['DejaVu_Sans_Mono',monospace] text-[18px] placeholder:text-[#555] ${fieldBox}`} />
    <span className="ml-3 h-full w-[2px] bg-[#151515]" />
    <button className="ml-auto flex h-full w-[159px] items-center gap-2 border-l-[3px] border-[#151515] pl-[16px]">
      <Glyph w={23} h={22}><path d="M0 0h16l4 4v16H0Z" fill="#777" /><path d="M3 0h12v8H3ZM3 12h8v8H3Z" fill="#c8c8c8" /><path d="M10.500 2H13v4h-2.500Z" fill="#222" /><path d="M17 11v10M12.500 13.500l9 5M21.500 13.500l-9 5" stroke="#242424" strokeWidth="5" /><path d="M17 11v10M12.500 13.500l9 5M21.500 13.500l-9 5" stroke="#d0d0d0" strokeWidth="2.200" /></Glyph>
      2 Unsaved
    </button>
    <button className="flex h-full w-[246px] items-center gap-[10px] border-l-[3px] border-[#151515] pl-[20px]">
      <Glyph w={20} h={23}><path d="M4 4v15M4 12h6q6 0 6-7" stroke="#777" strokeWidth="1.800" /><circle cx="4" cy="4" r="4" fill="#c8c8c8" /><circle cx="4" cy="19" r="4" fill="#c8c8c8" /><circle cx="16" cy="4" r="4" fill="#c8c8c8" /></Glyph>
      Revision Control<Chevron />
    </button>
  </footer>
);

export default function App() {
  return (
    <div className="flex h-screen w-full flex-col overflow-hidden bg-[#151515] font-['Roboto',sans-serif] text-[19px] leading-6 text-[#c0c0c0]">
      <Header />
      <Toolbar />
      <div className="mt-[5px] flex min-h-0 flex-1 pr-[7px] pl-[6px]">
        <div className="mr-2 flex w-[372px] shrink-0 flex-col gap-2">
          <Palette />
          <Hierarchy />
        </div>
        <Viewport />
        <div className="w-[7px] shrink-0" />
        <Details />
      </div>
      <StatusBar />
    </div>
  );
}
